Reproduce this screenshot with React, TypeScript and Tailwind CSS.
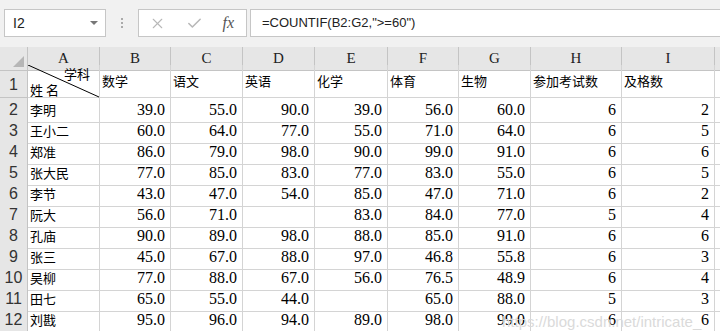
import { X, Check } from 'lucide-react';

const cols = ['A', 'B', 'C', 'D', 'E', 'F', 'G', 'H', 'I'];
const subjects = ['数学', '语文', '英语', '化学', '体育', '生物', '参加考试数', '及格数'];

// name, 6 scores, count, passed
const rows: [string, string[], number, number][] = [
    ['李明', ['39.0', '55.0', '90.0', '39.0', '56.0', '60.0'], 6, 2],
    ['王小二', ['60.0', '64.0', '77.0', '55.0', '71.0', '64.0'], 6, 5],
    ['郑准', ['86.0', '79.0', '98.0', '90.0', '99.0', '91.0'], 6, 6],
    ['张大民', ['77.0', '85.0', '83.0', '77.0', '83.0', '55.0'], 6, 5],
    ['李节', ['43.0', '47.0', '54.0', '85.0', '47.0', '71.0'], 6, 2],
    ['阮大', ['56.0', '71.0', '', '83.0', '84.0', '77.0'], 5, 4],
    ['孔庙', ['90.0', '89.0', '98.0', '88.0', '85.0', '91.0'], 6, 6],
    ['张三', ['45.0', '67.0', '88.0', '97.0', '46.8', '55.8'], 6, 3],
    ['吴柳', ['77.0', '88.0', '67.0', '56.0', '76.5', '48.9'], 6, 4],
    ['田七', ['65.0', '55.0', '44.0', '', '65.0', '88.0'], 5, 3],
    ['刘戡', ['95.0', '96.0', '94.0', '89.0', '98.0', '99.0'], 6, 6],
];

const gridCols = 'grid grid-cols-[28px_72px_71px_72px_72px_73px_71px_72px_91px_93px_1fr]';
const cjk = "font-['Noto_Sans_CJK_SC',sans-serif]";
const serif = "font-['Liberation_Serif','Noto_Sans_CJK_SC',serif]";

function RowHead({ n, tall }: { n: number; tall?: boolean }) {
    return (
        <div className={`bg-[#e6e6e6] border-r border-b border-[#c4c4c4] flex justify-center text-[16px] text-[#333] font-['Liberation_Sans',sans-serif] ${tall ? 'items-end' : 'items-center'}`}>
            {n}
        </div>
    );
}

function Num({ v }: { v: string | number }) {
    return (
        <div className={`border-r border-b border-[#d4d4d4] flex items-center justify-end pr-[5px] text-[16px] text-black ${serif}`}>
            {v}
        </div>
    );
}

export default function App() {
    return (
        <div className="w-[720px] h-[331px] overflow-hidden bg-white relative">
            {/* formula bar */}
            <div className="h-[47px] bg-[#f1f1f1] flex items-start pt-[9px] pl-[4px]">
                <div className="w-[102px] h-[28px] bg-white border border-[#c6c6c6] flex items-center justify-between pl-[8px] pr-[6px]">
                    <span className="text-[14px] text-[#222] font-['Liberation_Sans',sans-serif]">I2</span>
                    <svg width="10" height="6" viewBox="0 0 10 6"><path d="M1 1h8L5 5z" fill="#777" /></svg>
                </div>
                <div className="w-[32px] h-[28px] flex flex-col items-center justify-center gap-[2px]">
                    <span className="w-[2px] h-[2px] bg-[#aaa]" />
                    <span className="w-[2px] h-[2px] bg-[#aaa]" />
                    <span className="w-[2px] h-[2px] bg-[#aaa]" />
                </div>
                <div className="w-[109px] h-[28px] bg-white border border-[#c6c6c6] flex items-center pl-[10px] pr-[10px] justify-between">
                    <X size={17} strokeWidth={1.5} className="text-[#b8b8b8]" />
                    <Check size={17} strokeWidth={2.2} className="text-[#b8b8b8]" />
                    <span className="italic text-[16px] text-[#555] font-['Liberation_Serif',serif] pr-[2px]">fx</span>
                </div>
                <div className="ml-[3px] flex-1 h-[28px] bg-white border border-[#c6c6c6] border-r-0 flex items-center pl-[11px]">
                    <span className="text-[13px] text-[#222] font-['Liberation_Sans',sans-serif]">=COUNTIF(B2:G2,"&gt;=60")</span>
                </div>
            </div>

            {/* column headers */}
            <div className={`${gridCols} h-[18px]`}>
                <div className="bg-[#e6e6e6] border-r border-b border-[#c4c4c4] relative">
                    <svg className="absolute right-[3px] bottom-[3px]" width="11" height="11" viewBox="0 0 11 11">
                        <path d="M11 0V11H0z" fill="#b6b6b6" />
                    </svg>
                </div>
                {cols.map(c => (
                    <div key={c} className={`bg-[#e6e6e6] border-r border-b border-[#c4c4c4] flex items-center justify-center text-[15px] text-[#222] ${serif}`}>
                        {c}
                    </div>
                ))}
                <div className="bg-[#e6e6e6] border-b border-[#c4c4c4]" />
            </div>

            {/* row 1 */}
            <div className={`${gridCols} h-[33px]`}>
                <RowHead n={1} tall />
                <div className={`border-r border-b border-[#d4d4d4] relative ${cjk} text-[13px] leading-none text-black`}>
                    <svg className="absolute inset-0" width="72" height="33" viewBox="0 0 72 33">
                        <line x1="0" y1="0" x2="71" y2="32" stroke="#000" strokeWidth="1" />
                    </svg>
                    <span className="absolute right-[9px] top-[2px]">学科</span>
                    <span className="absolute left-[2px] bottom-[1px] tracking-[3px]">姓名</span>
                </div>
                {subjects.map(s => (
                    <div key={s} className={`border-r border-b border-[#d4d4d4] flex items-center pl-[2px] text-[13px] text-black ${cjk}`}>
                        {s}
                    </div>
                ))}
                <div className="border-b border-[#d4d4d4]" />
            </div>

            {/* data rows */}
            {rows.map(([name, scores, cnt, pass], i) => (
                <div key={name} className={`${gridCols} h-[21px]`}>
                    <RowHead n={i + 2} />
                    <div className={`border-r border-b border-[#d4d4d4] flex items-center pl-[2px] text-[13px] text-black ${cjk}`}>
                        {name}
                    </div>
                    {scores.map((s, j) => <Num key={j} v={s} />)}
                    <Num v={cnt} />
                    <Num v={pass} />
                    <div className="border-b border-[#d4d4d4]" />
                </div>
            ))}
            <div className={`${gridCols} h-[21px]`}>
                <div className="bg-[#e6e6e6] border-r border-[#c4c4c4]" />
                {cols.map(c => <div key={c} className="border-r border-[#d4d4d4]" />)}
                <div />
            </div>

            {/* watermark */}
            <div className="absolute left-[502px] top-[311px] text-[15px] text-[#dadada] font-['Liberation_Sans',sans-serif] pointer-events-none">
                https://blog.csdn.net/intricate_
            </div>
        </div>
    );
}
